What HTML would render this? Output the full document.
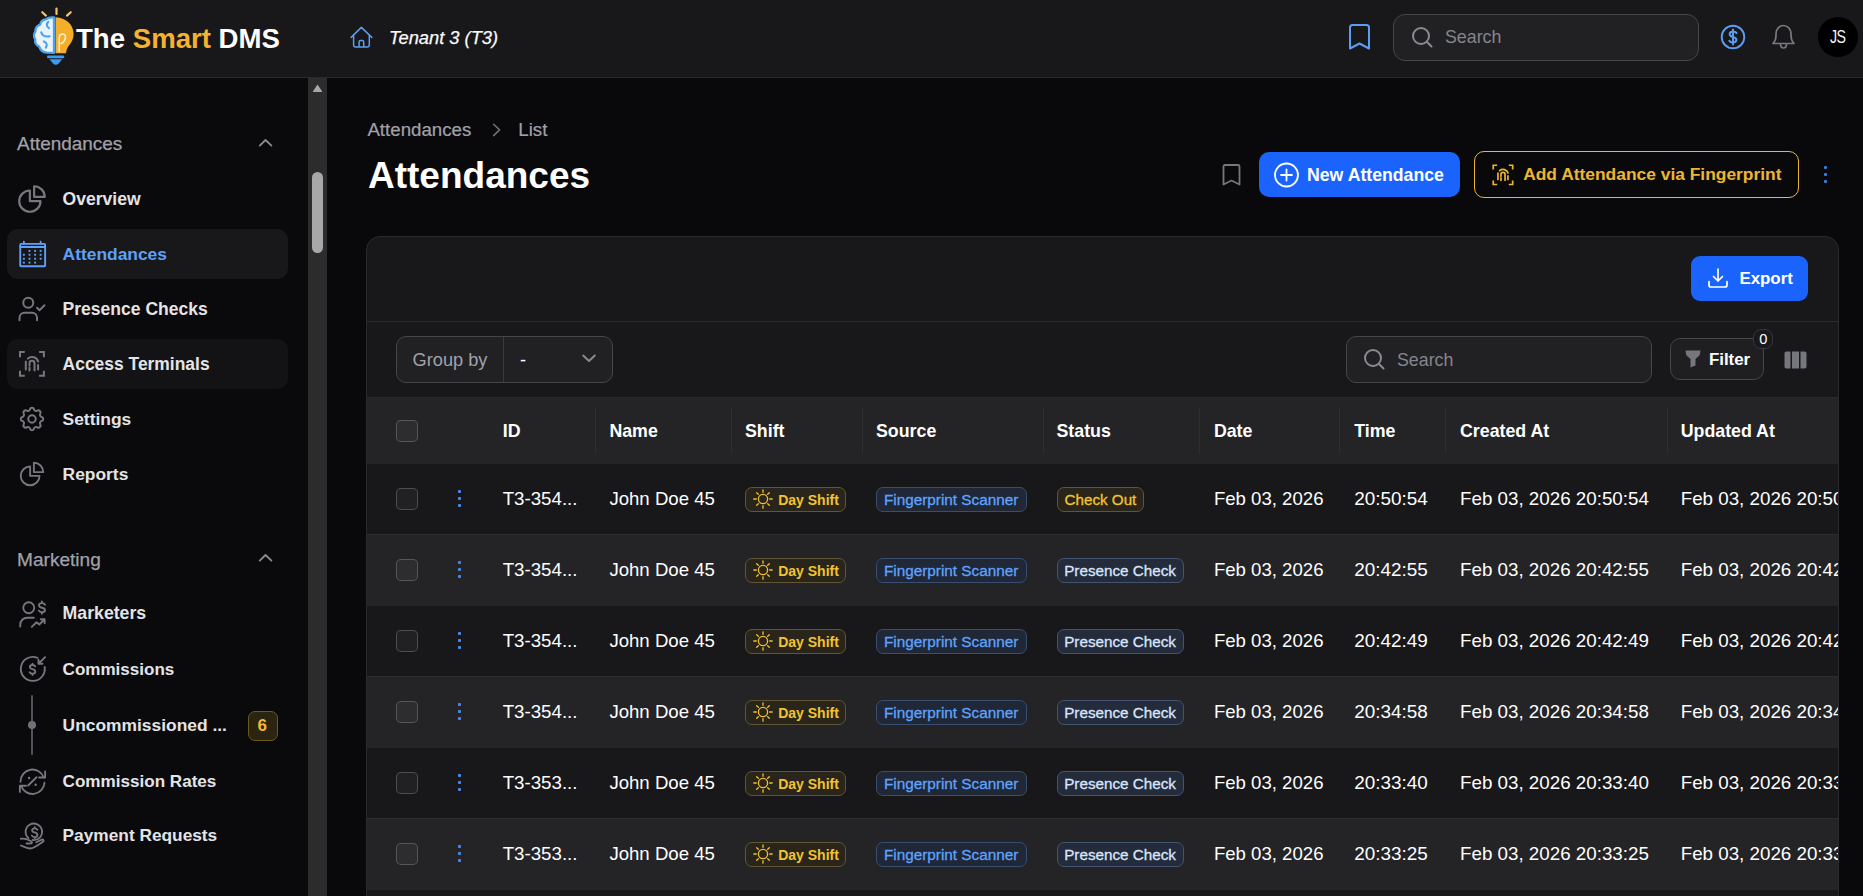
<!DOCTYPE html>
<html><head><meta charset="utf-8">
<style>
*{box-sizing:border-box;margin:0;padding:0}
html,body{width:1863px;height:896px;overflow:hidden;background:#09090b;font-family:"Liberation Sans",sans-serif;color:#fff}
svg{display:block;position:absolute;overflow:visible}
.a{position:absolute;white-space:nowrap;line-height:1}
.b{position:absolute}
.ic{fill:none;stroke-linecap:round;stroke-linejoin:round}
</style></head>
<body>
<div class="b" style="left:0.00px;top:0.00px;width:1863.00px;height:77.00px;background:#18181b"></div>
<div class="b" style="left:0.00px;top:77.00px;width:1863.00px;height:1.00px;background:#2a2a2e"></div>
<div class="b" style="left:0.00px;top:78.00px;width:308.00px;height:818.00px;background:#0a0a0c"></div>
<div class="b" style="left:308.00px;top:78.00px;width:19.00px;height:818.00px;background:#2c2c2c"></div>
<svg style="left:312.00px;top:84.00px;" width="11" height="9" viewBox="0 0 11 9"><path d="M5.5 1.5 L9.5 7.5 L1.5 7.5 Z" fill="#a8a8a8" stroke="#a8a8a8" stroke-width="1.2" stroke-linejoin="round"/></svg>
<div class="b" style="left:312.00px;top:172.00px;width:11.00px;height:81.00px;background:#a8a8a8;border-radius:6px"></div>
<svg style="left:0.00px;top:0.00px;" width="80" height="78" viewBox="0 0 80 78">
<g stroke="#f2c462" stroke-width="2.2" stroke-linecap="round">
<line x1="42.3" y1="12.2" x2="45.9" y2="15.6"/><line x1="56.5" y1="8.6" x2="56.5" y2="14"/><line x1="70.7" y1="12.2" x2="67" y2="15.6"/>
</g>
<path d="M54 17.4 C50.5 17 47.8 17.6 45.8 19.3 C42.8 19.6 40.6 21.8 40.2 24.6 C37.2 25.6 35.3 28.3 35.4 31.4 C33.8 33.6 33.7 37 35.2 39.3 C34.6 42.4 36.3 45.3 39.2 46.6 C40.3 50 43.3 52.4 46.8 52.6 L54 52.8 Z" fill="#e9f3fc" stroke="#4aa2ef" stroke-width="2.3" stroke-linejoin="round"/>
<path d="M48.3 21.8 C46.3 23.2 46.2 26.6 49 28.2 M41.2 32.3 C41.8 35.8 45.6 37 49.6 36.2 M43.9 41.4 C46.6 42.2 47.6 44.8 45.8 47.6" fill="none" stroke="#4aa2ef" stroke-width="2.1" stroke-linecap="round"/>
<line x1="54.2" y1="17" x2="54.2" y2="53.4" stroke="#4aa2ef" stroke-width="2"/>
<path d="M55.6 17.2 C65.8 17.4 73.6 24.6 73.6 33.8 C73.6 39.2 71.2 42.8 69 45.6 C67.2 48 66.2 50.5 66 53.3 L55.6 53.3 Z" fill="#f5ae2a"/>
<path d="M59.2 51.2 L59.2 38.5 C59.2 35.6 60.8 33.9 62.6 33.9 C64.6 33.9 65.8 35.6 65.4 37.8 C65 40.2 63 42.4 61.2 43.6" fill="none" stroke="#fdf1d8" stroke-width="1.5" stroke-linecap="round"/>
<rect x="47" y="55.6" width="17.3" height="2.7" rx="1.3" fill="#3d9bf0"/>
<path d="M49.4 59.3 L62.2 59.3 L58.6 63.6 C57 65.2 54.7 65.2 53.1 63.6 Z" fill="#3d9bf0"/>
</svg>
<div class="a" style="left:76.00px;top:24.54px;font-size:27.6px;color:#fff;font-weight:700;">The <span style="color:#f6b22c">Smart</span> DMS</div>
<svg style="left:345.00px;top:22.00px;" width="32" height="32" viewBox="0 0 32 32"><path class="ic" stroke="#5b9df0" stroke-width="1.5" d="M6.1 15.4 L16.4 5.4 L26.8 15.4 M8.6 13.3 V23 Q8.6 25 10.6 25 H22.3 Q24.3 25 24.3 23 V13.3 M14.1 25 V19.8 Q14.1 18.4 15.5 18.4 H17.3 Q18.7 18.4 18.7 19.8 V25"/></svg>
<div class="a" style="left:389.00px;top:28.81px;font-size:18.3px;color:#fafafa;font-style:italic;-webkit-text-stroke:0.25px #fafafa">Tenant 3 (T3)</div>
<svg style="left:1347.00px;top:23.00px;" width="25" height="28" viewBox="0 0 25 28"><path class="ic" stroke="#5b9df0" stroke-width="2" d="M3 4.5 C3 3 4 2 5.5 2 H19.5 C21 2 22 3 22 4.5 V25.5 L12.5 20.5 L3 25.5 Z"/></svg>
<div class="b" style="left:1393.00px;top:14.00px;width:306.00px;height:47.00px;background:#212124;border:1px solid #45454a;border-radius:12px"></div>
<svg style="left:1410.00px;top:25.00px;" width="24" height="24" viewBox="0 0 24 24"><circle cx="11" cy="11" r="8" class="ic" stroke="#8a8a90" stroke-width="2"/><path class="ic" stroke="#8a8a90" stroke-width="2" d="M17 17 L21.5 21.5"/></svg>
<div class="a" style="left:1445.00px;top:28.63px;font-size:17.8px;color:#85858c;">Search</div>
<svg style="left:1720.00px;top:24.00px;" width="26" height="26" viewBox="0 0 26 26"><circle cx="13" cy="13" r="11.3" class="ic" stroke="#5b9df0" stroke-width="1.9"/><path class="ic" stroke="#5b9df0" stroke-width="2" d="M13 5.5 V20.5 M16.5 9 C15.5 7.8 14.5 7.5 13 7.5 C11 7.5 9.7 8.5 9.7 10.2 C9.7 12 11 12.5 13 13 C15 13.5 16.4 14 16.4 15.8 C16.4 17.5 15 18.5 13 18.5 C11.3 18.5 10 18 9.3 16.8"/></svg>
<svg style="left:1770.00px;top:23.00px;" width="27" height="28" viewBox="0 0 27 28"><path class="ic" stroke="#78787e" stroke-width="1.7" d="M3 20.5 C5 18.5 6 16 6 12.5 V10.5 C6 6 9.5 2.5 13.5 2.5 C17.5 2.5 21 6 21 10.5 V12.5 C21 16 22 18.5 24 20.5 Z M10.5 21 C10.5 23.5 12 25 13.5 25 C15 25 16.5 23.5 16.5 21"/></svg>
<div class="b" style="left:1818.00px;top:17.00px;width:40.00px;height:40.00px;background:#000;border-radius:50%"></div>
<div class="a" style="left:1829.50px;top:28.83px;font-size:17.8px;color:#f4f4f5;letter-spacing:-0.8px;transform:scaleX(0.8);transform-origin:0 0">JS</div>
<div class="a" style="left:17.00px;top:134.56px;font-size:18.95px;color:#a1a1aa;-webkit-text-stroke:0.25px #a1a1aa">Attendances</div>
<svg style="left:257.00px;top:137.50px;" width="17" height="10" viewBox="0 0 17 10"><path class="ic" stroke="#8a8a90" stroke-width="1.9" d="M2.8 7.6 L8.5 2 L14.4 7.6"/></svg>
<div class="b" style="left:7.00px;top:229.00px;width:281.00px;height:50.00px;background:#18181b;border-radius:11px"></div>
<div class="b" style="left:7.00px;top:339.00px;width:281.00px;height:50.00px;background:#131316;border-radius:11px"></div>
<svg style="left:14.50px;top:182.00px;" width="34" height="34" viewBox="0 0 24 24"><g class="ic" stroke="#76767d" stroke-width="1.55"><path d="M10.5 6a7.5 7.5 0 1 0 7.5 7.5h-7.5V6Z"/><path d="M13.5 10.5H21A7.5 7.5 0 0 0 13.5 3v7.5Z"/></g></svg>
<div class="a" style="left:62.60px;top:190.74px;font-size:17.55px;color:#e4e4e7;font-weight:700;">Overview</div>
<svg style="left:16.50px;top:239.00px;" width="30" height="30" viewBox="0 0 24 24"><g class="ic" stroke="#5ea1f6" stroke-width="1.5" style="color:#5ea1f6"><rect x="2.6" y="3.9" width="19.9" height="17.9" rx="0.6"/><path d="M2.6 6.4 H22.5 M5.5 2.2 V3.9 M18.9 2.2 V3.9"/><rect x="9.25" y="8.75" width="1.5" height="1.5" fill="currentColor" stroke="none"/><rect x="13.75" y="8.75" width="1.5" height="1.5" fill="currentColor" stroke="none"/><rect x="18.15" y="8.75" width="1.5" height="1.5" fill="currentColor" stroke="none"/><rect x="4.75" y="11.85" width="1.5" height="1.5" fill="currentColor" stroke="none"/><rect x="9.25" y="11.85" width="1.5" height="1.5" fill="currentColor" stroke="none"/><rect x="13.75" y="11.85" width="1.5" height="1.5" fill="currentColor" stroke="none"/><rect x="18.15" y="11.85" width="1.5" height="1.5" fill="currentColor" stroke="none"/><rect x="4.75" y="15.05" width="1.5" height="1.5" fill="currentColor" stroke="none"/><rect x="9.25" y="15.05" width="1.5" height="1.5" fill="currentColor" stroke="none"/><rect x="13.75" y="15.05" width="1.5" height="1.5" fill="currentColor" stroke="none"/><rect x="18.15" y="15.05" width="1.5" height="1.5" fill="currentColor" stroke="none"/><rect x="4.75" y="18.15" width="1.5" height="1.5" fill="currentColor" stroke="none"/><rect x="9.25" y="18.15" width="1.5" height="1.5" fill="currentColor" stroke="none"/><rect x="13.75" y="18.15" width="1.5" height="1.5" fill="currentColor" stroke="none"/></g></svg>
<div class="a" style="left:62.60px;top:245.87px;font-size:17.4px;color:#5ea1f6;font-weight:700;">Attendances</div>
<svg style="left:16.50px;top:294.00px;" width="30" height="30" viewBox="0 0 24 24"><g class="ic" stroke="#76767d" stroke-width="1.6" style="color:#76767d"><path d="M16 21v-2a4 4 0 0 0-4-4H6a4 4 0 0 0-4 4v2"/><circle cx="9" cy="7" r="4"/><polyline points="16 11 18 13 22 9"/></g></svg>
<div class="a" style="left:62.60px;top:300.74px;font-size:17.55px;color:#e4e4e7;font-weight:700;">Presence Checks</div>
<svg style="left:14.00px;top:346.00px;" width="36" height="36" viewBox="0 0 36 36"><g class="ic" stroke="#76767d" stroke-width="2"><g stroke-linecap="butt" stroke-linejoin="miter"><path d="M6 11.2 V6 H10.8 M25.1 6 H29.9 V11.2 M6 24.7 V29.7 H10.8 M25.1 29.7 H29.9 V24.7"/></g><path d="M11.8 15.6 V23.5 M13.9 12.6 A6.4 6.4 0 0 1 24.2 15.6 M24.1 19.1 V23.5 M15.5 24.6 V21.6 M15.5 19.6 V17.3 A2.5 2.5 0 0 1 20.5 17.3 V24.4"/></g></svg>
<div class="a" style="left:62.60px;top:355.83px;font-size:17.45px;color:#e4e4e7;font-weight:700;">Access Terminals</div>
<svg style="left:16.50px;top:404.00px;" width="30" height="30" viewBox="0 0 24 24"><g class="ic" stroke="#76767d" stroke-width="1.6" style="color:#76767d"><path d="M10.325 4.317c.426 -1.756 2.924 -1.756 3.35 0a1.724 1.724 0 0 0 2.573 1.066c1.543 -.94 3.31 .826 2.37 2.37a1.724 1.724 0 0 0 1.065 2.572c1.756 .426 1.756 2.924 0 3.35a1.724 1.724 0 0 0 -1.066 2.573c.94 1.543 -.826 3.31 -2.37 2.37a1.724 1.724 0 0 0 -2.572 1.065c-.426 1.756 -2.924 1.756 -3.35 0a1.724 1.724 0 0 0 -2.573 -1.066c-1.543 .94 -3.31 -.826 -2.37 -2.37a1.724 1.724 0 0 0 -1.065 -2.572c-1.756 -.426 -1.756 -2.924 0 -3.35a1.724 1.724 0 0 0 1.066 -2.573c-.94 -1.543 .826 -3.31 2.37 -2.37c1 .608 2.296 .07 2.572 -1.065z"/><circle cx="12" cy="12" r="3"/></g></svg>
<div class="a" style="left:62.60px;top:410.87px;font-size:17.4px;color:#e4e4e7;font-weight:700;">Settings</div>
<svg style="left:16.50px;top:459.00px;" width="30" height="30" viewBox="0 0 24 24"><g class="ic" stroke="#76767d" stroke-width="1.5" style="color:#76767d"><path d="M10.5 6a7.5 7.5 0 1 0 7.5 7.5h-7.5V6Z"/><path d="M13.5 10.5H21A7.5 7.5 0 0 0 13.5 3v7.5Z"/></g></svg>
<div class="a" style="left:62.60px;top:465.87px;font-size:17.4px;color:#e4e4e7;font-weight:700;">Reports</div>
<div class="a" style="left:17.00px;top:549.53px;font-size:19.1px;color:#a1a1aa;-webkit-text-stroke:0.25px #a1a1aa">Marketing</div>
<svg style="left:257.00px;top:552.50px;" width="17" height="10" viewBox="0 0 17 10"><path class="ic" stroke="#8a8a90" stroke-width="1.9" d="M2.8 7.6 L8.5 2 L14.4 7.6"/></svg>
<svg style="left:16.50px;top:598.50px;" width="30" height="30" viewBox="0 0 24 24"><g class="ic" stroke="#76767d" stroke-width="1.5" style="color:#76767d"><circle cx="9.4" cy="7" r="4.4"/><path d="M2.6 22 V20.5 A5.5 5.5 0 0 1 8.1 15 H13.5"/><path d="M11.8 22.3 L15.6 18.6 L17.8 20.4 L22.1 16.2 M19 16.2 H22.1 V19.3"/><path d="M19.9 2 V3.2 M19.9 10.6 V11.8 M22.4 4.6 C22 3.8 21.2 3.3 20 3.3 C18.6 3.3 17.6 4 17.6 5.1 C17.6 7.6 22.4 6.4 22.4 8.8 C22.4 9.9 21.4 10.6 20 10.6 C18.8 10.6 17.9 10.1 17.5 9.3"/></g></svg>
<div class="a" style="left:62.60px;top:605.12px;font-size:17.7px;color:#e4e4e7;font-weight:700;">Marketers</div>
<svg style="left:16.50px;top:653.50px;" width="30" height="30" viewBox="0 0 24 24"><g class="ic" stroke="#76767d" stroke-width="1.5" style="color:#76767d"><path d="M16.4 3.1 A9.6 9.6 0 1 0 22.1 10.3"/><path d="M22.5 2.5 L17.2 7.8 M17.2 4.6 V7.8 H20.4"/><path d="M12.4 7.8 V8.8 M12.4 15.8 V16.8 M14.6 9.9 C14.2 9.2 13.4 8.8 12.4 8.8 C11.2 8.8 10.3 9.4 10.3 10.4 C10.3 12.6 14.6 11.6 14.6 13.9 C14.6 15 13.6 15.8 12.4 15.8 C11.3 15.8 10.5 15.3 10.1 14.6"/></g></svg>
<div class="a" style="left:62.60px;top:660.67px;font-size:17.05px;color:#e4e4e7;font-weight:700;">Commissions</div>
<div class="b" style="left:31.00px;top:695.00px;width:2.00px;height:60.00px;background:#52525b;border-radius:1px"></div>
<div class="b" style="left:28.00px;top:721.00px;width:8.00px;height:8.00px;background:#71717a;border-radius:50%"></div>
<div class="a" style="left:62.60px;top:716.67px;font-size:17.4px;color:#e4e4e7;font-weight:700;">Uncommissioned ...</div>
<div class="b" style="left:248.00px;top:711.00px;width:30.00px;height:30.00px;background:#2a2410;border:1px solid #6a5a1f;border-radius:7px"></div>
<div class="a" style="left:257.50px;top:717.21px;font-size:17px;color:#f5b82e;font-weight:700;">6</div>
<svg style="left:16.50px;top:765.50px;" width="30" height="30" viewBox="0 0 24 24"><g class="ic" stroke="#76767d" stroke-width="1.5" style="color:#76767d"><path d="M2.8 12.6 A9.6 9.6 0 0 1 21.5 9.4 M22.5 4.3 V9.2 H17.6"/><path d="M22 13.4 A9.6 9.6 0 0 1 3.3 15.8 M2.3 20.7 V15.8 H7.2"/><path d="M8.9 15.6 L15.6 9"/><circle cx="9.7" cy="9.6" r="1" fill="currentColor" stroke="none"/><circle cx="14.9" cy="14.9" r="1" fill="currentColor" stroke="none"/></g></svg>
<div class="a" style="left:62.60px;top:772.64px;font-size:17.08px;color:#e4e4e7;font-weight:700;">Commission Rates</div>
<svg style="left:16.50px;top:820.50px;" width="30" height="30" viewBox="0 0 24 24"><g class="ic" stroke="#76767d" stroke-width="1.5" style="color:#76767d"><path d="M9.2 13.7 A6.6 6.6 0 1 1 12.5 15.2"/><path d="M14.2 5 V5.9 M14.2 12.9 V13.8 M16.3 7 C15.9 6.3 15.2 5.9 14.2 5.9 C13 5.9 12.1 6.5 12.1 7.5 C12.1 9.6 16.3 8.6 16.3 10.9 C16.3 12 15.4 12.9 14.2 12.9 C13.1 12.9 12.3 12.4 11.9 11.7"/><path d="M3.1 14.2 C5.8 13.9 8.5 14.7 11 16 C12.4 16.8 12.3 18 10.8 18 H7.6"/><path d="M3.1 19.6 C5.5 20.6 8.2 22 10.6 22 C12.6 22 14.5 21 20.8 16.6 C21.8 15.9 21.1 14.4 19.9 14.9 L15.4 17"/></g></svg>
<div class="a" style="left:62.60px;top:827.46px;font-size:17.3px;color:#e4e4e7;font-weight:700;">Payment Requests</div>
<div class="a" style="left:367.40px;top:121.07px;font-size:18.7px;color:#a1a1aa;-webkit-text-stroke:0.2px #a1a1aa">Attendances</div>
<svg style="left:490.00px;top:122.00px;" width="14" height="16" viewBox="0 0 14 16"><path class="ic" stroke="#71717a" stroke-width="1.5" d="M3.6 2.2 L9.6 7.9 L3.6 13.6"/></svg>
<div class="a" style="left:518.30px;top:121.07px;font-size:18.7px;color:#a1a1aa;-webkit-text-stroke:0.2px #a1a1aa">List</div>
<div class="a" style="left:368.00px;top:157.08px;font-size:37px;color:#fff;font-weight:700;">Attendances</div>
<svg style="left:1221.00px;top:163.00px;" width="21" height="24" viewBox="0 0 21 24"><path class="ic" stroke="#76767d" stroke-width="1.8" d="M2.5 3.5 C2.5 2.5 3.2 2 4 2 H17 C17.8 2 18.5 2.5 18.5 3.5 V21.5 L10.5 17.5 L2.5 21.5 Z"/></svg>
<div class="b" style="left:1259.00px;top:152.00px;width:201.00px;height:45.00px;background:#1a64fd;border-radius:10px"></div>
<svg style="left:1273.00px;top:161.50px;" width="27" height="27" viewBox="0 0 27 27"><circle cx="13.5" cy="13" r="11.5" class="ic" stroke="#fff" stroke-width="1.8"/><path class="ic" stroke="#fff" stroke-width="1.8" d="M13.5 7.5 V18.5 M8 13 H19"/></svg>
<div class="a" style="left:1307.00px;top:166.52px;font-size:17.7px;color:#fff;font-weight:700;">New Attendance</div>
<div class="b" style="left:1474.00px;top:151.00px;width:325.00px;height:47.00px;border:1.5px solid #eeb630;border-radius:10px"></div>
<svg style="left:1486.00px;top:158.00px;" width="34" height="34" viewBox="0 0 36 36"><g class="ic" stroke="#eeb630" stroke-width="2.1" transform="translate(18 18) scale(0.86) translate(-18 -18)"><g stroke-linecap="butt" stroke-linejoin="miter"><path d="M6 11.2 V6 H10.8 M25.1 6 H29.9 V11.2 M6 24.7 V29.7 H10.8 M25.1 29.7 H29.9 V24.7"/></g><path d="M11.8 15.6 V23.5 M13.9 12.6 A6.4 6.4 0 0 1 24.2 15.6 M24.1 19.1 V23.5 M15.5 24.6 V21.6 M15.5 19.6 V17.3 A2.5 2.5 0 0 1 20.5 17.3 V24.4"/></g></svg>
<div class="a" style="left:1523.20px;top:166.27px;font-size:17.4px;color:#eeb630;font-weight:700;">Add Attendance via Fingerprint</div>
<div class="b" style="left:1824.00px;top:165.90px;width:3.40px;height:3.40px;background:#3b7be0;border-radius:1px"></div>
<div class="b" style="left:1824.00px;top:172.90px;width:3.40px;height:3.40px;background:#3b7be0;border-radius:1px"></div>
<div class="b" style="left:1824.00px;top:179.90px;width:3.40px;height:3.40px;background:#3b7be0;border-radius:1px"></div>
<div class="b" style="left:366px;top:236px;width:1473px;height:700px;background:#18181b;border:1px solid #2a2a2e;border-radius:14px;overflow:hidden">
<div class="b" style="left:1324.00px;top:19.00px;width:117.00px;height:45.00px;background:#1a64fd;border-radius:9px"></div>
<svg style="left:1339.00px;top:29.00px;" width="24" height="24" viewBox="0 0 24 24"><path class="ic" stroke="#fff" stroke-width="1.7" d="M3 15.5 V19 C3 20 3.8 21 5 21 H19 C20.2 21 21 20 21 19 V15.5 M12 3 V15 M7.5 10.5 L12 15 L16.5 10.5"/></svg>
<div class="a" style="left:1372.40px;top:34.29px;font-size:16.9px;color:#fff;font-weight:700;">Export</div>
<div class="b" style="left:-1.00px;top:84.00px;width:1473.00px;height:1.00px;background:#2a2a2e"></div>
<div class="b" style="left:29.00px;top:99.00px;width:217.00px;height:47.00px;background:#212124;border:1px solid #45454a;border-radius:10px"></div>
<div class="b" style="left:136.00px;top:100.00px;width:1.00px;height:45.00px;background:#3a3a3e"></div>
<div class="a" style="left:45.60px;top:113.89px;font-size:18.2px;color:#a1a1aa;">Group by</div>
<div class="a" style="left:153.00px;top:113.89px;font-size:18.2px;color:#fff;">-</div>
<svg style="left:213.00px;top:115.00px;" width="18" height="12" viewBox="0 0 18 12"><path class="ic" stroke="#8a8a90" stroke-width="1.9" d="M3.2 3.5 L9 9 L14.8 3.5"/></svg>
<div class="b" style="left:979.00px;top:99.00px;width:306.00px;height:47.00px;background:#212124;border:1px solid #45454a;border-radius:10px"></div>
<svg style="left:995.00px;top:110.00px;" width="24" height="24" viewBox="0 0 24 24"><circle cx="11" cy="11" r="8" class="ic" stroke="#8a8a90" stroke-width="2"/><path class="ic" stroke="#8a8a90" stroke-width="2" d="M17 17 L21.5 21.5"/></svg>
<div class="a" style="left:1030.00px;top:114.53px;font-size:17.8px;color:#85858c;">Search</div>
<div class="b" style="left:1303.00px;top:101.00px;width:94.00px;height:42.00px;background:#1f1f22;border:1px solid #45454a;border-radius:10px"></div>
<svg style="left:1317.00px;top:112.00px;" width="18" height="20" viewBox="0 0 18 20"><path fill="#76767d" d="M1.5 1.5 H16.5 L16 5 C15.8 6 15 7 14 7.8 L11.5 10 V16.5 L6.5 18.5 V10 L4 7.8 C3 7 2.2 6 2 5 Z"/></svg>
<div class="a" style="left:1341.90px;top:114.99px;font-size:16.9px;color:#fff;font-weight:700;">Filter</div>
<div class="b" style="left:1386.00px;top:92.00px;width:20.00px;height:20.00px;background:#18191e;border:1px solid #36363b;border-radius:8px"></div>
<div class="a" style="left:1392.30px;top:95.44px;font-size:14.6px;color:#fff;">0</div>
<svg style="left:1417.00px;top:113.50px;" width="23" height="18" viewBox="0 0 23 18"><path fill="#76767d" d="M2.5 0.5 H6.5 V17.5 H2.5 C1.3 17.5 0.5 16.7 0.5 15.5 V2.5 C0.5 1.3 1.3 0.5 2.5 0.5Z M8 0.5 H15 V17.5 H8 Z M16.5 0.5 H20.5 C21.7 0.5 22.5 1.3 22.5 2.5 V15.5 C22.5 16.7 21.7 17.5 20.5 17.5 H16.5 Z"/></svg>
<div class="b" style="left:-1.00px;top:160.00px;width:1473.00px;height:1.00px;background:#2a2a2e"></div>
<div class="b" style="left:-1.00px;top:161.00px;width:1473.00px;height:66.00px;background:#242427"></div>
<div class="b" style="left:228.30px;top:171.00px;width:1.00px;height:46.00px;background:#2e2e32"></div>
<div class="b" style="left:364.00px;top:171.00px;width:1.00px;height:46.00px;background:#2e2e32"></div>
<div class="b" style="left:495.40px;top:171.00px;width:1.00px;height:46.00px;background:#2e2e32"></div>
<div class="b" style="left:676.30px;top:171.00px;width:1.00px;height:46.00px;background:#2e2e32"></div>
<div class="b" style="left:831.90px;top:171.00px;width:1.00px;height:46.00px;background:#2e2e32"></div>
<div class="b" style="left:972.30px;top:171.00px;width:1.00px;height:46.00px;background:#2e2e32"></div>
<div class="b" style="left:1078.00px;top:171.00px;width:1.00px;height:46.00px;background:#2e2e32"></div>
<div class="b" style="left:1299.60px;top:171.00px;width:1.00px;height:46.00px;background:#2e2e32"></div>
<div class="b" style="left:29.00px;top:183.00px;width:22.00px;height:22.00px;background:rgba(255,255,255,0.045);border:1px solid rgba(255,255,255,0.2);border-radius:5px"></div>
<div class="a" style="left:135.70px;top:185.83px;font-size:17.8px;color:#fff;font-weight:700;">ID</div>
<div class="a" style="left:242.40px;top:185.83px;font-size:17.8px;color:#fff;font-weight:700;">Name</div>
<div class="a" style="left:378.00px;top:185.83px;font-size:17.8px;color:#fff;font-weight:700;">Shift</div>
<div class="a" style="left:509.00px;top:185.83px;font-size:17.8px;color:#fff;font-weight:700;">Source</div>
<div class="a" style="left:689.50px;top:185.83px;font-size:17.8px;color:#fff;font-weight:700;">Status</div>
<div class="a" style="left:846.90px;top:185.83px;font-size:17.8px;color:#fff;font-weight:700;">Date</div>
<div class="a" style="left:987.30px;top:185.83px;font-size:17.8px;color:#fff;font-weight:700;">Time</div>
<div class="a" style="left:1093.00px;top:185.83px;font-size:17.8px;color:#fff;font-weight:700;">Created At</div>
<div class="a" style="left:1313.70px;top:185.83px;font-size:17.8px;color:#fff;font-weight:700;">Updated At</div>
<div class="b" style="left:29.00px;top:251.00px;width:22.00px;height:22.00px;background:rgba(255,255,255,0.045);border:1px solid rgba(255,255,255,0.2);border-radius:5px"></div>
<div class="b" style="left:90.90px;top:252.80px;width:3.30px;height:3.30px;background:#4a86e6;border-radius:0.8px"></div>
<div class="b" style="left:90.90px;top:259.70px;width:3.30px;height:3.30px;background:#4a86e6;border-radius:0.8px"></div>
<div class="b" style="left:90.90px;top:266.60px;width:3.30px;height:3.30px;background:#4a86e6;border-radius:0.8px"></div>
<div class="a" style="left:135.70px;top:252.77px;font-size:18.7px;color:#fff;">T3-354...</div>
<div class="a" style="left:242.40px;top:252.86px;font-size:18.6px;color:#fff;">John Doe 45</div>
<div class="b" style="left:378.00px;top:249.50px;width:101.00px;height:25.00px;background:#29251a;border:1px solid #605535;border-radius:7px"></div>
<svg style="left:386.00px;top:252.30px;" width="20" height="20" viewBox="0 0 20 20"><g class="ic" stroke="#f0c030" stroke-width="1.3"><circle cx="10" cy="10" r="4.6"/><path d="M10 0.8V3.3M10 16.7V19.2M0.8 10H3.3M16.7 10H19.2M3.7 3.7L5.3 5.3M14.7 14.7L16.3 16.3M3.7 16.3L5.3 14.7M14.7 5.3L16.3 3.7"/></g></svg>
<div class="a" style="left:411.20px;top:256.05px;font-size:14px;color:#f2c233;font-weight:700;">Day Shift</div>
<div class="b" style="left:509.00px;top:249.50px;width:151.00px;height:25.00px;background:#202737;border:1px solid #384e70;border-radius:7px"></div>
<div class="a" style="left:517.00px;top:254.95px;font-size:15.3px;color:#5fa3fb;-webkit-text-stroke:0.3px #5fa3fb">Fingerprint Scanner</div>
<div class="b" style="left:690.00px;top:249.50px;width:87.00px;height:25.00px;background:#29251a;border:1px solid #605535;border-radius:7px"></div>
<div class="a" style="left:697.60px;top:255.03px;font-size:15.2px;color:#f2c233;-webkit-text-stroke:0.3px #f2c233">Check Out</div>
<div class="a" style="left:846.90px;top:252.86px;font-size:18.6px;color:#fff;">Feb 03, 2026</div>
<div class="a" style="left:987.30px;top:252.60px;font-size:18.9px;color:#fff;">20:50:54</div>
<div class="a" style="left:1093.00px;top:252.70px;font-size:18.78px;color:#fff;">Feb 03, 2026 20:50:54</div>
<div class="a" style="left:1313.70px;top:252.70px;font-size:18.78px;color:#fff;">Feb 03, 2026 20:50:54</div>
<div class="b" style="left:-1.00px;top:297.00px;width:1473.00px;height:71.00px;background:#242427"></div>
<div class="b" style="left:-1.00px;top:297.00px;width:1473.00px;height:1.00px;background:#2d2d30"></div>
<div class="b" style="left:29.00px;top:322.00px;width:22.00px;height:22.00px;background:rgba(255,255,255,0.045);border:1px solid rgba(255,255,255,0.2);border-radius:5px"></div>
<div class="b" style="left:90.90px;top:323.80px;width:3.30px;height:3.30px;background:#4a86e6;border-radius:0.8px"></div>
<div class="b" style="left:90.90px;top:330.70px;width:3.30px;height:3.30px;background:#4a86e6;border-radius:0.8px"></div>
<div class="b" style="left:90.90px;top:337.60px;width:3.30px;height:3.30px;background:#4a86e6;border-radius:0.8px"></div>
<div class="a" style="left:135.70px;top:323.77px;font-size:18.7px;color:#fff;">T3-354...</div>
<div class="a" style="left:242.40px;top:323.86px;font-size:18.6px;color:#fff;">John Doe 45</div>
<div class="b" style="left:378.00px;top:320.50px;width:101.00px;height:25.00px;background:#29251a;border:1px solid #605535;border-radius:7px"></div>
<svg style="left:386.00px;top:323.30px;" width="20" height="20" viewBox="0 0 20 20"><g class="ic" stroke="#f0c030" stroke-width="1.3"><circle cx="10" cy="10" r="4.6"/><path d="M10 0.8V3.3M10 16.7V19.2M0.8 10H3.3M16.7 10H19.2M3.7 3.7L5.3 5.3M14.7 14.7L16.3 16.3M3.7 16.3L5.3 14.7M14.7 5.3L16.3 3.7"/></g></svg>
<div class="a" style="left:411.20px;top:327.05px;font-size:14px;color:#f2c233;font-weight:700;">Day Shift</div>
<div class="b" style="left:509.00px;top:320.50px;width:151.00px;height:25.00px;background:#202737;border:1px solid #384e70;border-radius:7px"></div>
<div class="a" style="left:517.00px;top:325.95px;font-size:15.3px;color:#5fa3fb;-webkit-text-stroke:0.3px #5fa3fb">Fingerprint Scanner</div>
<div class="b" style="left:690.00px;top:320.50px;width:127.00px;height:25.00px;background:#242b3a;border:1px solid #425470;border-radius:7px"></div>
<div class="a" style="left:697.20px;top:326.00px;font-size:15.24px;color:#d9e5fb;-webkit-text-stroke:0.3px #d9e5fb">Presence Check</div>
<div class="a" style="left:846.90px;top:323.86px;font-size:18.6px;color:#fff;">Feb 03, 2026</div>
<div class="a" style="left:987.30px;top:323.60px;font-size:18.9px;color:#fff;">20:42:55</div>
<div class="a" style="left:1093.00px;top:323.70px;font-size:18.78px;color:#fff;">Feb 03, 2026 20:42:55</div>
<div class="a" style="left:1313.70px;top:323.70px;font-size:18.78px;color:#fff;">Feb 03, 2026 20:42:55</div>
<div class="b" style="left:-1.00px;top:368.00px;width:1473.00px;height:1.00px;background:#242427"></div>
<div class="b" style="left:29.00px;top:393.00px;width:22.00px;height:22.00px;background:rgba(255,255,255,0.045);border:1px solid rgba(255,255,255,0.2);border-radius:5px"></div>
<div class="b" style="left:90.90px;top:394.80px;width:3.30px;height:3.30px;background:#4a86e6;border-radius:0.8px"></div>
<div class="b" style="left:90.90px;top:401.70px;width:3.30px;height:3.30px;background:#4a86e6;border-radius:0.8px"></div>
<div class="b" style="left:90.90px;top:408.60px;width:3.30px;height:3.30px;background:#4a86e6;border-radius:0.8px"></div>
<div class="a" style="left:135.70px;top:394.77px;font-size:18.7px;color:#fff;">T3-354...</div>
<div class="a" style="left:242.40px;top:394.86px;font-size:18.6px;color:#fff;">John Doe 45</div>
<div class="b" style="left:378.00px;top:391.50px;width:101.00px;height:25.00px;background:#29251a;border:1px solid #605535;border-radius:7px"></div>
<svg style="left:386.00px;top:394.30px;" width="20" height="20" viewBox="0 0 20 20"><g class="ic" stroke="#f0c030" stroke-width="1.3"><circle cx="10" cy="10" r="4.6"/><path d="M10 0.8V3.3M10 16.7V19.2M0.8 10H3.3M16.7 10H19.2M3.7 3.7L5.3 5.3M14.7 14.7L16.3 16.3M3.7 16.3L5.3 14.7M14.7 5.3L16.3 3.7"/></g></svg>
<div class="a" style="left:411.20px;top:398.05px;font-size:14px;color:#f2c233;font-weight:700;">Day Shift</div>
<div class="b" style="left:509.00px;top:391.50px;width:151.00px;height:25.00px;background:#202737;border:1px solid #384e70;border-radius:7px"></div>
<div class="a" style="left:517.00px;top:396.95px;font-size:15.3px;color:#5fa3fb;-webkit-text-stroke:0.3px #5fa3fb">Fingerprint Scanner</div>
<div class="b" style="left:690.00px;top:391.50px;width:127.00px;height:25.00px;background:#242b3a;border:1px solid #425470;border-radius:7px"></div>
<div class="a" style="left:697.20px;top:397.00px;font-size:15.24px;color:#d9e5fb;-webkit-text-stroke:0.3px #d9e5fb">Presence Check</div>
<div class="a" style="left:846.90px;top:394.86px;font-size:18.6px;color:#fff;">Feb 03, 2026</div>
<div class="a" style="left:987.30px;top:394.60px;font-size:18.9px;color:#fff;">20:42:49</div>
<div class="a" style="left:1093.00px;top:394.70px;font-size:18.78px;color:#fff;">Feb 03, 2026 20:42:49</div>
<div class="a" style="left:1313.70px;top:394.70px;font-size:18.78px;color:#fff;">Feb 03, 2026 20:42:49</div>
<div class="b" style="left:-1.00px;top:439.00px;width:1473.00px;height:71.00px;background:#242427"></div>
<div class="b" style="left:-1.00px;top:439.00px;width:1473.00px;height:1.00px;background:#2d2d30"></div>
<div class="b" style="left:29.00px;top:464.00px;width:22.00px;height:22.00px;background:rgba(255,255,255,0.045);border:1px solid rgba(255,255,255,0.2);border-radius:5px"></div>
<div class="b" style="left:90.90px;top:465.80px;width:3.30px;height:3.30px;background:#4a86e6;border-radius:0.8px"></div>
<div class="b" style="left:90.90px;top:472.70px;width:3.30px;height:3.30px;background:#4a86e6;border-radius:0.8px"></div>
<div class="b" style="left:90.90px;top:479.60px;width:3.30px;height:3.30px;background:#4a86e6;border-radius:0.8px"></div>
<div class="a" style="left:135.70px;top:465.77px;font-size:18.7px;color:#fff;">T3-354...</div>
<div class="a" style="left:242.40px;top:465.86px;font-size:18.6px;color:#fff;">John Doe 45</div>
<div class="b" style="left:378.00px;top:462.50px;width:101.00px;height:25.00px;background:#29251a;border:1px solid #605535;border-radius:7px"></div>
<svg style="left:386.00px;top:465.30px;" width="20" height="20" viewBox="0 0 20 20"><g class="ic" stroke="#f0c030" stroke-width="1.3"><circle cx="10" cy="10" r="4.6"/><path d="M10 0.8V3.3M10 16.7V19.2M0.8 10H3.3M16.7 10H19.2M3.7 3.7L5.3 5.3M14.7 14.7L16.3 16.3M3.7 16.3L5.3 14.7M14.7 5.3L16.3 3.7"/></g></svg>
<div class="a" style="left:411.20px;top:469.05px;font-size:14px;color:#f2c233;font-weight:700;">Day Shift</div>
<div class="b" style="left:509.00px;top:462.50px;width:151.00px;height:25.00px;background:#202737;border:1px solid #384e70;border-radius:7px"></div>
<div class="a" style="left:517.00px;top:467.95px;font-size:15.3px;color:#5fa3fb;-webkit-text-stroke:0.3px #5fa3fb">Fingerprint Scanner</div>
<div class="b" style="left:690.00px;top:462.50px;width:127.00px;height:25.00px;background:#242b3a;border:1px solid #425470;border-radius:7px"></div>
<div class="a" style="left:697.20px;top:468.00px;font-size:15.24px;color:#d9e5fb;-webkit-text-stroke:0.3px #d9e5fb">Presence Check</div>
<div class="a" style="left:846.90px;top:465.86px;font-size:18.6px;color:#fff;">Feb 03, 2026</div>
<div class="a" style="left:987.30px;top:465.60px;font-size:18.9px;color:#fff;">20:34:58</div>
<div class="a" style="left:1093.00px;top:465.70px;font-size:18.78px;color:#fff;">Feb 03, 2026 20:34:58</div>
<div class="a" style="left:1313.70px;top:465.70px;font-size:18.78px;color:#fff;">Feb 03, 2026 20:34:58</div>
<div class="b" style="left:-1.00px;top:510.00px;width:1473.00px;height:1.00px;background:#242427"></div>
<div class="b" style="left:29.00px;top:535.00px;width:22.00px;height:22.00px;background:rgba(255,255,255,0.045);border:1px solid rgba(255,255,255,0.2);border-radius:5px"></div>
<div class="b" style="left:90.90px;top:536.80px;width:3.30px;height:3.30px;background:#4a86e6;border-radius:0.8px"></div>
<div class="b" style="left:90.90px;top:543.70px;width:3.30px;height:3.30px;background:#4a86e6;border-radius:0.8px"></div>
<div class="b" style="left:90.90px;top:550.60px;width:3.30px;height:3.30px;background:#4a86e6;border-radius:0.8px"></div>
<div class="a" style="left:135.70px;top:536.77px;font-size:18.7px;color:#fff;">T3-353...</div>
<div class="a" style="left:242.40px;top:536.86px;font-size:18.6px;color:#fff;">John Doe 45</div>
<div class="b" style="left:378.00px;top:533.50px;width:101.00px;height:25.00px;background:#29251a;border:1px solid #605535;border-radius:7px"></div>
<svg style="left:386.00px;top:536.30px;" width="20" height="20" viewBox="0 0 20 20"><g class="ic" stroke="#f0c030" stroke-width="1.3"><circle cx="10" cy="10" r="4.6"/><path d="M10 0.8V3.3M10 16.7V19.2M0.8 10H3.3M16.7 10H19.2M3.7 3.7L5.3 5.3M14.7 14.7L16.3 16.3M3.7 16.3L5.3 14.7M14.7 5.3L16.3 3.7"/></g></svg>
<div class="a" style="left:411.20px;top:540.05px;font-size:14px;color:#f2c233;font-weight:700;">Day Shift</div>
<div class="b" style="left:509.00px;top:533.50px;width:151.00px;height:25.00px;background:#202737;border:1px solid #384e70;border-radius:7px"></div>
<div class="a" style="left:517.00px;top:538.95px;font-size:15.3px;color:#5fa3fb;-webkit-text-stroke:0.3px #5fa3fb">Fingerprint Scanner</div>
<div class="b" style="left:690.00px;top:533.50px;width:127.00px;height:25.00px;background:#242b3a;border:1px solid #425470;border-radius:7px"></div>
<div class="a" style="left:697.20px;top:539.00px;font-size:15.24px;color:#d9e5fb;-webkit-text-stroke:0.3px #d9e5fb">Presence Check</div>
<div class="a" style="left:846.90px;top:536.86px;font-size:18.6px;color:#fff;">Feb 03, 2026</div>
<div class="a" style="left:987.30px;top:536.60px;font-size:18.9px;color:#fff;">20:33:40</div>
<div class="a" style="left:1093.00px;top:536.70px;font-size:18.78px;color:#fff;">Feb 03, 2026 20:33:40</div>
<div class="a" style="left:1313.70px;top:536.70px;font-size:18.78px;color:#fff;">Feb 03, 2026 20:33:40</div>
<div class="b" style="left:-1.00px;top:581.00px;width:1473.00px;height:71.00px;background:#242427"></div>
<div class="b" style="left:-1.00px;top:581.00px;width:1473.00px;height:1.00px;background:#2d2d30"></div>
<div class="b" style="left:29.00px;top:606.00px;width:22.00px;height:22.00px;background:rgba(255,255,255,0.045);border:1px solid rgba(255,255,255,0.2);border-radius:5px"></div>
<div class="b" style="left:90.90px;top:607.80px;width:3.30px;height:3.30px;background:#4a86e6;border-radius:0.8px"></div>
<div class="b" style="left:90.90px;top:614.70px;width:3.30px;height:3.30px;background:#4a86e6;border-radius:0.8px"></div>
<div class="b" style="left:90.90px;top:621.60px;width:3.30px;height:3.30px;background:#4a86e6;border-radius:0.8px"></div>
<div class="a" style="left:135.70px;top:607.77px;font-size:18.7px;color:#fff;">T3-353...</div>
<div class="a" style="left:242.40px;top:607.86px;font-size:18.6px;color:#fff;">John Doe 45</div>
<div class="b" style="left:378.00px;top:604.50px;width:101.00px;height:25.00px;background:#29251a;border:1px solid #605535;border-radius:7px"></div>
<svg style="left:386.00px;top:607.30px;" width="20" height="20" viewBox="0 0 20 20"><g class="ic" stroke="#f0c030" stroke-width="1.3"><circle cx="10" cy="10" r="4.6"/><path d="M10 0.8V3.3M10 16.7V19.2M0.8 10H3.3M16.7 10H19.2M3.7 3.7L5.3 5.3M14.7 14.7L16.3 16.3M3.7 16.3L5.3 14.7M14.7 5.3L16.3 3.7"/></g></svg>
<div class="a" style="left:411.20px;top:611.05px;font-size:14px;color:#f2c233;font-weight:700;">Day Shift</div>
<div class="b" style="left:509.00px;top:604.50px;width:151.00px;height:25.00px;background:#202737;border:1px solid #384e70;border-radius:7px"></div>
<div class="a" style="left:517.00px;top:609.95px;font-size:15.3px;color:#5fa3fb;-webkit-text-stroke:0.3px #5fa3fb">Fingerprint Scanner</div>
<div class="b" style="left:690.00px;top:604.50px;width:127.00px;height:25.00px;background:#242b3a;border:1px solid #425470;border-radius:7px"></div>
<div class="a" style="left:697.20px;top:610.00px;font-size:15.24px;color:#d9e5fb;-webkit-text-stroke:0.3px #d9e5fb">Presence Check</div>
<div class="a" style="left:846.90px;top:607.86px;font-size:18.6px;color:#fff;">Feb 03, 2026</div>
<div class="a" style="left:987.30px;top:607.60px;font-size:18.9px;color:#fff;">20:33:25</div>
<div class="a" style="left:1093.00px;top:607.70px;font-size:18.78px;color:#fff;">Feb 03, 2026 20:33:25</div>
<div class="a" style="left:1313.70px;top:607.70px;font-size:18.78px;color:#fff;">Feb 03, 2026 20:33:25</div>
<div class="b" style="left:-1.00px;top:652.00px;width:1473.00px;height:1.00px;background:#242427"></div>
<div class="b" style="left:29.00px;top:677.00px;width:22.00px;height:22.00px;background:rgba(255,255,255,0.045);border:1px solid rgba(255,255,255,0.2);border-radius:5px"></div>
<div class="b" style="left:90.90px;top:678.80px;width:3.30px;height:3.30px;background:#4a86e6;border-radius:0.8px"></div>
<div class="b" style="left:90.90px;top:685.70px;width:3.30px;height:3.30px;background:#4a86e6;border-radius:0.8px"></div>
<div class="b" style="left:90.90px;top:692.60px;width:3.30px;height:3.30px;background:#4a86e6;border-radius:0.8px"></div>
<div class="a" style="left:135.70px;top:678.77px;font-size:18.7px;color:#fff;">T3-353...</div>
<div class="a" style="left:242.40px;top:678.86px;font-size:18.6px;color:#fff;">John Doe 45</div>
<div class="b" style="left:378.00px;top:675.50px;width:101.00px;height:25.00px;background:#29251a;border:1px solid #605535;border-radius:7px"></div>
<svg style="left:386.00px;top:678.30px;" width="20" height="20" viewBox="0 0 20 20"><g class="ic" stroke="#f0c030" stroke-width="1.3"><circle cx="10" cy="10" r="4.6"/><path d="M10 0.8V3.3M10 16.7V19.2M0.8 10H3.3M16.7 10H19.2M3.7 3.7L5.3 5.3M14.7 14.7L16.3 16.3M3.7 16.3L5.3 14.7M14.7 5.3L16.3 3.7"/></g></svg>
<div class="a" style="left:411.20px;top:682.05px;font-size:14px;color:#f2c233;font-weight:700;">Day Shift</div>
<div class="b" style="left:509.00px;top:675.50px;width:151.00px;height:25.00px;background:#202737;border:1px solid #384e70;border-radius:7px"></div>
<div class="a" style="left:517.00px;top:680.95px;font-size:15.3px;color:#5fa3fb;-webkit-text-stroke:0.3px #5fa3fb">Fingerprint Scanner</div>
<div class="b" style="left:690.00px;top:675.50px;width:127.00px;height:25.00px;background:#242b3a;border:1px solid #425470;border-radius:7px"></div>
<div class="a" style="left:697.20px;top:681.00px;font-size:15.24px;color:#d9e5fb;-webkit-text-stroke:0.3px #d9e5fb">Presence Check</div>
<div class="a" style="left:846.90px;top:678.86px;font-size:18.6px;color:#fff;">Feb 03, 2026</div>
<div class="a" style="left:987.30px;top:678.60px;font-size:18.9px;color:#fff;">20:33:10</div>
<div class="a" style="left:1093.00px;top:678.70px;font-size:18.78px;color:#fff;">Feb 03, 2026 20:33:10</div>
<div class="a" style="left:1313.70px;top:678.70px;font-size:18.78px;color:#fff;">Feb 03, 2026 20:33:10</div>
</div>
</body></html>
